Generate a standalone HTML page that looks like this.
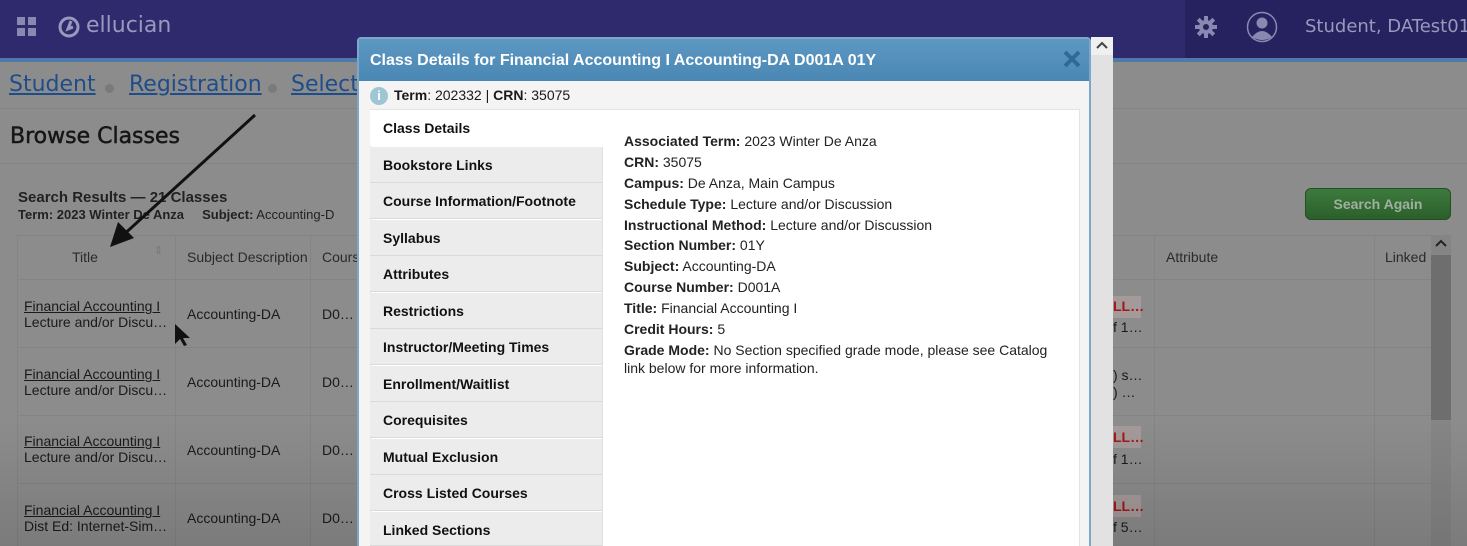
<!DOCTYPE html>
<html><head><style>
*{margin:0;padding:0;box-sizing:border-box}
html,body{width:1467px;height:546px;overflow:hidden}
body{position:relative;background:#8c8c8c;font-family:"Liberation Sans",Arial,sans-serif;color:#1a1a1a}
.a{position:absolute;white-space:nowrap}
.hdr{left:0;top:0;width:1467px;height:58px;background:#2f2a6e}
.hdr2{left:1185px;top:0;width:282px;height:58px;background:#26225f}
.stripe{left:0;top:58px;width:1467px;height:4px;background:#4f7aa8}
.crumb{font-family:"DejaVu Sans",sans-serif;font-size:22px;color:#1f4d8a;text-decoration:underline;top:72px}
.dot{width:9px;height:9px;border-radius:50%;background:#7a7a7a;top:84px}
.th{font-size:14px;color:#2a2a2a;top:249px}
.row{font-size:14px;color:#1a1a1a}
.vl{width:1px;background:#848484}
.hl{height:1px;background:#848484}
.modal{left:357px;top:37px;width:734px;height:509px;background:#f4f4f4;border:2px solid #7ea6c8;border-bottom:none;border-radius:4px 4px 0 0}
.mh{left:359px;top:39px;width:730px;height:42px;background:linear-gradient(#5c98c2,#4b87b4)}
.tab{left:370px;width:232px;height:36px;background:#ececec;border-bottom:1px solid #dadada;font-size:14px;font-weight:bold;padding:10px 0 0 13px;color:#111}
.d{left:624px;font-size:14px;color:#222}
</style></head><body>
<div class="a hdr"></div><div class="a hdr2"></div><div class="a stripe"></div>
<svg class="a" style="left:17px;top:17px" width="19" height="19"><rect x="0" y="0" width="8" height="8" fill="#8a88b0"/><rect x="11" y="0" width="8" height="8" fill="#8a88b0"/><rect x="0" y="11" width="8" height="8" fill="#8a88b0"/><rect x="11" y="11" width="8" height="8" fill="#8a88b0"/></svg>
<svg class="a" style="left:58px;top:16px" width="22" height="22"><circle cx="11" cy="11" r="9" fill="none" stroke="#9a98bc" stroke-width="3"/><path d="M13 5 L10 13 L15 11" fill="none" stroke="#9a98bc" stroke-width="3"/></svg>
<div class="a" style="left:86px;top:13px;font-family:'DejaVu Sans',sans-serif;font-size:22px;color:#9a98bc">ellucian</div>
<svg class="a" style="left:1194px;top:15px" width="24" height="24" viewBox="0 0 24 24"><g fill="#8a88b0"><circle cx="12" cy="12" r="7"/><rect x="10" y="1" width="4" height="22"/><rect x="1" y="10" width="22" height="4"/><rect x="10" y="1" width="4" height="22" transform="rotate(45 12 12)"/><rect x="10" y="1" width="4" height="22" transform="rotate(-45 12 12)"/></g><circle cx="12" cy="12" r="3" fill="#26225f"/></svg>
<svg class="a" style="left:1246px;top:11px" width="32" height="32"><circle cx="16" cy="16" r="14.5" fill="none" stroke="#8a88b0" stroke-width="1.5"/><circle cx="16" cy="12" r="5.5" fill="#8a88b0"/><path d="M6 26 Q16 14 26 26 Q16 32 6 26Z" fill="#8a88b0"/></svg>
<div class="a" style="left:1305px;top:16px;font-family:'DejaVu Sans',sans-serif;font-size:18px;color:#9a98bc">Student, DATest01</div>

<div class="a crumb" style="left:9px">Student</div><div class="a dot" style="left:105px"></div>
<div class="a crumb" style="left:129px">Registration</div><div class="a dot" style="left:268px"></div>
<div class="a crumb" style="left:291px">Select</div>
<div class="a hl" style="left:0;top:108px;width:1467px"></div>
<div class="a" style="left:10px;top:124px;font-family:'DejaVu Sans',sans-serif;font-size:22px;color:#161616;-webkit-text-stroke:0.5px #161616">Browse Classes</div>
<div class="a hl" style="left:0;top:163px;width:1467px"></div>
<div class="a" style="left:18px;top:189px;font-size:15px;font-weight:bold;color:#222">Search Results — 21 Classes</div>
<div class="a" style="left:18px;top:207px;font-size:13px;color:#222"><b>Term: 2023 Winter De Anza</b> &nbsp;&nbsp;&nbsp;&nbsp;<b>Subject:</b> Accounting-D</div>
<div class="a" style="left:1305px;top:188px;width:146px;height:32px;background:linear-gradient(#3d7a3d,#2b5f2b);border:1px solid #244e24;border-radius:6px;color:#a0b0a0;font-size:14px;font-weight:bold;text-align:center;line-height:30px">Search Again</div>
<div class="a hl" style="left:17px;top:235px;width:1415px"></div>
<div class="a th" style="left:72px">Title</div><div class="a" style="left:154px;top:244px;font-size:11px;color:#777">⇕</div>
<div class="a th" style="left:187px">Subject Description</div>
<div class="a th" style="left:322px">Cours</div>
<div class="a th" style="left:1166px">Attribute</div>
<div class="a th" style="left:1385px">Linked</div>
<div class="a vl" style="left:17px;top:235px;height:311px"></div>
<div class="a vl" style="left:175px;top:235px;height:311px"></div>
<div class="a vl" style="left:310px;top:235px;height:311px"></div>
<div class="a vl" style="left:1154px;top:235px;height:311px"></div>
<div class="a vl" style="left:1374px;top:235px;height:311px"></div>
<div class="a hl" style="left:17px;top:279px;width:1415px"></div>
<div class="a hl" style="left:17px;top:347px;width:1415px"></div>
<div class="a hl" style="left:17px;top:415px;width:1415px"></div>
<div class="a hl" style="left:17px;top:483px;width:1415px"></div>
<div class="a" style="left:1431px;top:235px;width:20px;height:311px;background:#858585"></div>
<div class="a" style="left:1431px;top:255px;width:20px;height:165px;background:#6e6e6e"></div>
<svg class="a" style="left:1435px;top:239px" width="12" height="8"><path d="M1 7 L6 2 L11 7" fill="none" stroke="#222" stroke-width="2"/></svg>

<div class="a row" style="left:24px;top:298px"><u>Financial Accounting I</u><br>Lecture and/or Discu…</div>
<div class="a row" style="left:24px;top:366px"><u>Financial Accounting I</u><br>Lecture and/or Discu…</div>
<div class="a row" style="left:24px;top:433px"><u>Financial Accounting I</u><br>Lecture and/or Discu…</div>
<div class="a row" style="left:24px;top:502px"><u>Financial Accounting I</u><br>Dist Ed: Internet-Sim…</div>
<div class="a row" style="left:187px;top:306px">Accounting-DA</div><div class="a row" style="left:322px;top:306px">D0…</div>
<div class="a row" style="left:187px;top:374px">Accounting-DA</div><div class="a row" style="left:322px;top:374px">D0…</div>
<div class="a row" style="left:187px;top:442px">Accounting-DA</div><div class="a row" style="left:322px;top:442px">D0…</div>
<div class="a row" style="left:187px;top:510px">Accounting-DA</div><div class="a row" style="left:322px;top:510px">D0…</div>
<svg class="a" style="left:172px;top:322px" width="20" height="26"><path d="M3 2 L3 22 L8 17 L12 24 L15 23 L11 16 L18 16 Z" fill="#111"/></svg>
<svg class="a" style="left:100px;top:110px" width="160" height="140"><line x1="155" y1="5" x2="20" y2="128" stroke="#111" stroke-width="3"/><path d="M10 137 L18 112 L34 128 Z" fill="#111"/></svg>
<div class="a" style="left:1113px;top:296px;width:28px;height:22px;background:#a59a9a"></div>
<div class="a row" style="left:1113px;top:298px;color:#a01818;font-weight:bold">LL…</div>
<div class="a row" style="left:1113px;top:319px">f 1…</div>
<div class="a row" style="left:1113px;top:367px">) s…</div><div class="a row" style="left:1113px;top:384px">) …</div>
<div class="a" style="left:1113px;top:426px;width:28px;height:22px;background:#a59a9a"></div>
<div class="a row" style="left:1113px;top:429px;color:#a01818;font-weight:bold">LL…</div>
<div class="a row" style="left:1113px;top:451px">f 1…</div>
<div class="a" style="left:1113px;top:495px;width:28px;height:22px;background:#a59a9a"></div>
<div class="a row" style="left:1113px;top:498px;color:#a01818;font-weight:bold">LL…</div>
<div class="a row" style="left:1113px;top:519px">f 5…</div>
<div class="a" style="left:0;top:420px;width:1467px;height:126px;background:linear-gradient(rgba(0,0,0,0),rgba(0,0,0,0.12))"></div>

<div class="a modal"></div>
<div class="a mh"></div>
<div class="a" style="left:370px;top:52px;font-size:16px;font-weight:bold;color:#fff">Class Details for Financial Accounting I Accounting-DA D001A 01Y</div>
<svg class="a" style="left:1063px;top:50px" width="18" height="18"><path d="M2 2 L16 16 M16 2 L2 16" stroke="#2f6a96" stroke-width="4"/></svg>
<div class="a" style="left:1091px;top:37px;width:22px;height:509px;background:#e2e2e2"></div>
<div class="a" style="left:1091px;top:37px;width:22px;height:18px;background:#f0f0f0"></div>
<svg class="a" style="left:1096px;top:41px" width="12" height="8"><path d="M1 7 L6 2 L11 7" fill="none" stroke="#444" stroke-width="2"/></svg>
<div class="a" style="left:370px;top:87px;width:18px;height:18px;border-radius:50%;background:#9fc6d4;color:#fff;font-size:13px;font-weight:bold;text-align:center;line-height:18px">i</div>
<div class="a" style="left:394px;top:87px;font-size:14px"><b>Term</b>: 202332 | <b>CRN</b>: 35075</div>
<div class="a" style="left:370px;top:109px;width:710px;height:437px;background:#fff;border:1px solid #e4e4e4;border-bottom:none"></div>
<div class="a tab" style="top:110px;background:#fff;border:none">Class Details</div>
<div class="a tab" style="top:147px">Bookstore Links</div>
<div class="a tab" style="top:183px">Course Information/Footnote</div>
<div class="a tab" style="top:220px">Syllabus</div>
<div class="a tab" style="top:256px">Attributes</div>
<div class="a tab" style="top:293px">Restrictions</div>
<div class="a tab" style="top:329px">Instructor/Meeting Times</div>
<div class="a tab" style="top:366px">Enrollment/Waitlist</div>
<div class="a tab" style="top:402px">Corequisites</div>
<div class="a tab" style="top:439px">Mutual Exclusion</div>
<div class="a tab" style="top:475px">Cross Listed Courses</div>
<div class="a tab" style="top:512px;height:34px">Linked Sections</div>
<div class="a" style="left:602px;top:147px;width:1px;height:399px;background:#e0e0e0"></div>
<div class="a d" style="top:133px"><b>Associated Term:</b> 2023 Winter De Anza</div>
<div class="a d" style="top:154px"><b>CRN:</b> 35075</div>
<div class="a d" style="top:175px"><b>Campus:</b> De Anza, Main Campus</div>
<div class="a d" style="top:196px"><b>Schedule Type:</b> Lecture and/or Discussion</div>
<div class="a d" style="top:217px"><b>Instructional Method:</b> Lecture and/or Discussion</div>
<div class="a d" style="top:237px"><b>Section Number:</b> 01Y</div>
<div class="a d" style="top:258px"><b>Subject:</b> Accounting-DA</div>
<div class="a d" style="top:279px"><b>Course Number:</b> D001A</div>
<div class="a d" style="top:300px"><b>Title:</b> Financial Accounting I</div>
<div class="a d" style="top:321px"><b>Credit Hours:</b> 5</div>
<div class="a d" style="top:342px"><b>Grade Mode:</b> No Section specified grade mode, please see Catalog</div>
<div class="a d" style="top:360px">link below for more information.</div>
</body></html>
